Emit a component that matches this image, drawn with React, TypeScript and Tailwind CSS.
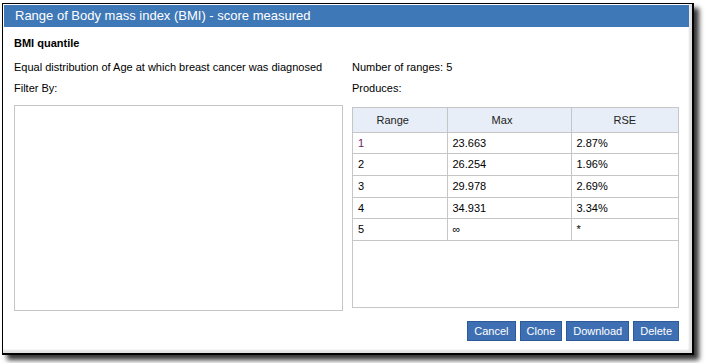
import React from "react";

const rows = [
  { range: "1", max: "23.663", rse: "2.87%", link: true },
  { range: "2", max: "26.254", rse: "1.96%" },
  { range: "3", max: "29.978", rse: "2.69%" },
  { range: "4", max: "34.931", rse: "3.34%" },
  { range: "5", max: "∞", rse: "*" },
];

const buttons = ["Cancel", "Clone", "Download", "Delete"];

export default function App() {
  return (
    <div
      className="w-[705px] h-[363px] bg-white pt-[3px] pl-[2px] text-[11px] text-black"
      style={{ fontFamily: '"Liberation Sans", Arial, sans-serif' }}>
      {/* dialog frame */}
      <div className="w-[692px] h-[352px] bg-white border-l border-t border-r-2 border-b-2 border-black shadow-[inset_-3px_-3px_2px_rgba(0,0,0,0.12),5px_5px_5px_rgba(0,0,0,0.8)] flex flex-col pl-px pt-px pr-[3px] pb-[3px]">
        {/* title */}
        <div className="h-[22px] bg-[#3f78b6] text-white text-[13px] leading-[22px] pl-[11px]">
          Range of Body mass index (BMI) - score measured
        </div>

        {/* body */}
        <div className="flex-1 pl-[10px] pr-[9px] pt-[10px]">
          <div className="font-bold leading-[13px]">BMI quantile</div>

          <div className="grid grid-cols-[329px_327px] gap-x-[9px] mt-[11px]">
            <div className="leading-[13px]">
              Equal distribution of Age at which breast cancer was diagnosed
            </div>
            <div className="leading-[13px]">Number of ranges: 5</div>

            <div className="leading-[13px] mt-[8px]">Filter By:</div>
            <div className="leading-[13px] mt-[8px]">Produces:</div>

            {/* filter box */}
            <div className="mt-[10px] h-[206px] border border-[#c6c6c6] bg-white" />

            {/* produces table */}
            <div className="mt-[12px] h-[201px] border border-[#c6c6c6] bg-white">
              <table className="w-full border-collapse">
                <thead>
                  <tr className="bg-[#e7eef7] h-[24px]">
                    <th className="w-[94px] font-normal text-[#222] text-center pr-[14px] border-r border-b border-[#c6c6c6]">
                      Range
                    </th>
                    <th className="w-[124px] font-normal text-[#222] text-center pr-[14px] border-r border-b border-[#c6c6c6]">
                      Max
                    </th>
                    <th className="font-normal text-[#222] text-center border-b border-[#c6c6c6]">
                      RSE
                    </th>
                  </tr>
                </thead>
                <tbody>
                  {rows.map((r) => (
                    <tr key={r.range} className="h-[21.7px]">
                      <td
                        className={
                          r.link
                            ? "pl-[5px] text-[#6e1d5f] border-r border-b border-[#c6c6c6]"
                            : "pl-[5px] border-r border-b border-[#c6c6c6]"
                        }>
                        {r.range}
                      </td>
                      <td className="pl-[5px] border-r border-b border-[#c6c6c6]">
                        {r.max}
                      </td>
                      <td className="pl-[5px] border-b border-[#c6c6c6]">
                        {r.rse}
                      </td>
                    </tr>
                  ))}
                </tbody>
              </table>
            </div>
          </div>

          {/* actions */}
          <div className="flex justify-end gap-[4px] mt-[10px] pr-[1px]">
            {buttons.map((b) => (
              <button
                key={b}
                className="h-[20px] px-[6px] bg-[#3e6fb3] border border-[#2d5a98] text-white text-[11px] leading-[18px]">
                {b}
              </button>
            ))}
          </div>
        </div>
      </div>
    </div>
  );
}
